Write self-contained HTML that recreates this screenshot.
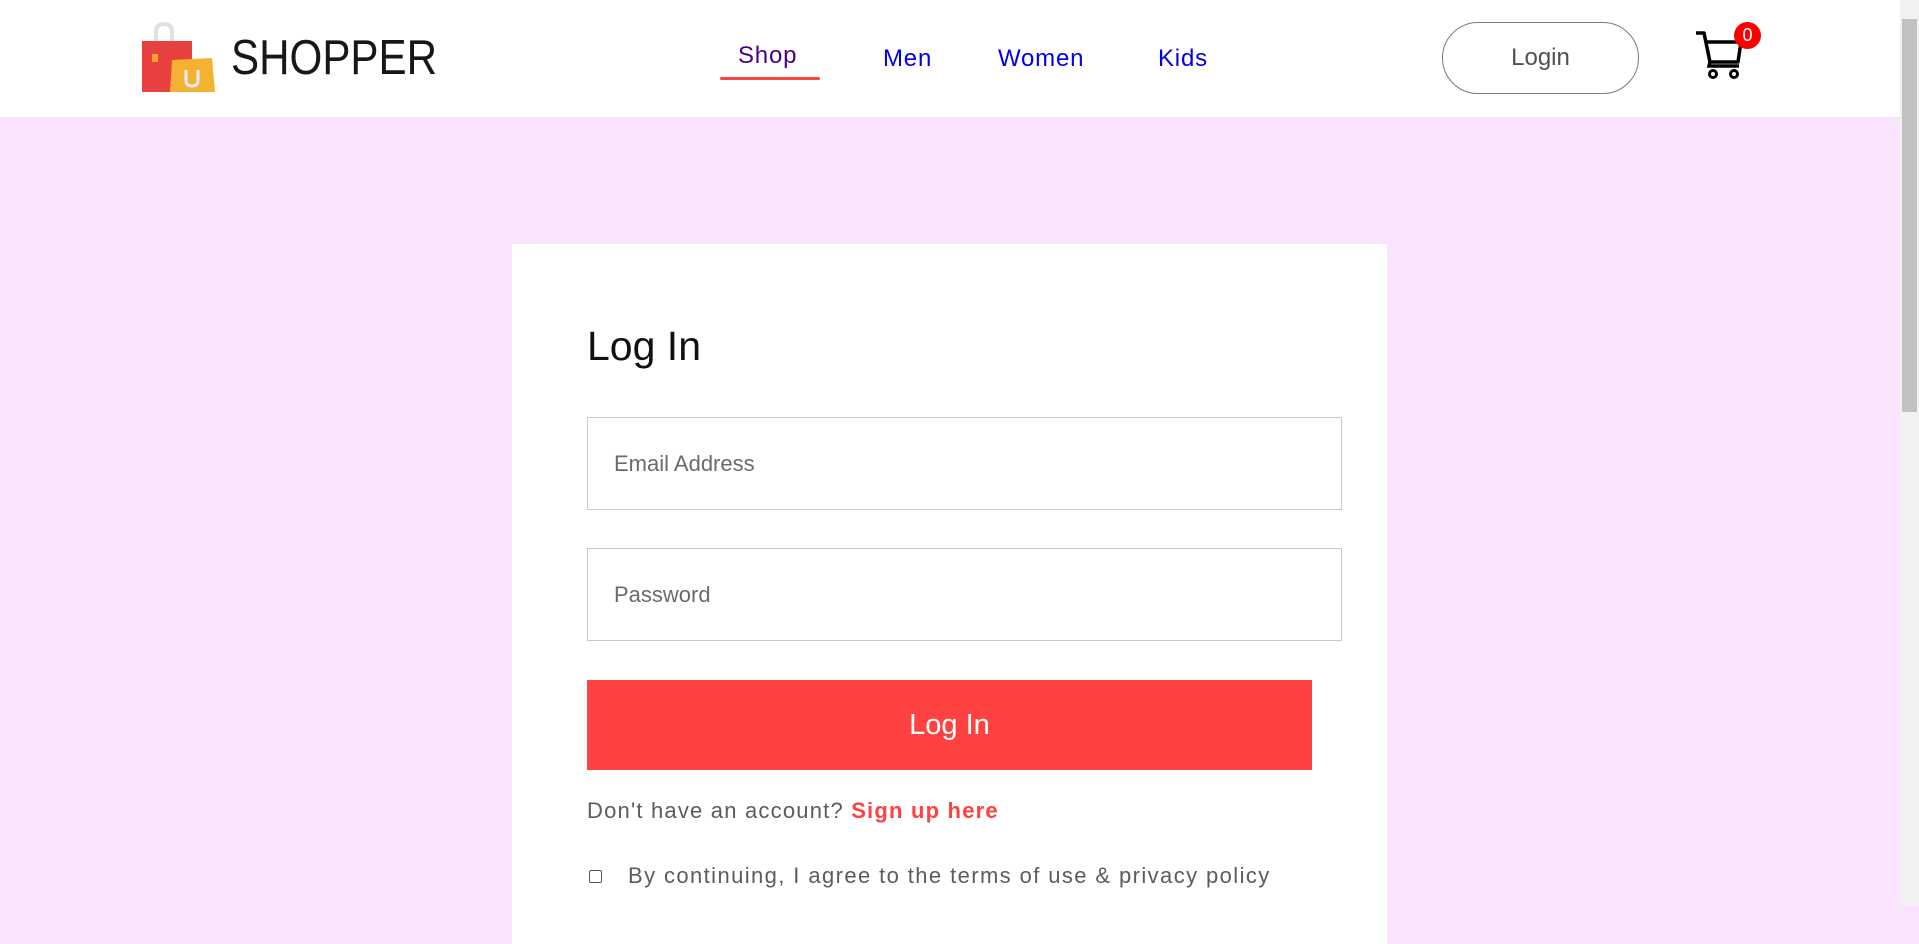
<!DOCTYPE html>
<html><head><style>
*{box-sizing:border-box;margin:0;padding:0}
body{width:1919px;height:906px;overflow:hidden;background:#fae3fc;font-family:"Liberation Sans",sans-serif;position:relative}
.hdr{position:absolute;left:0;top:0;width:1900px;height:118px;background:#fff;border-bottom:1px solid #f0e4f2}
.logo{position:absolute;left:231px;top:30px;font-size:49px;color:#171717;font-weight:500;transform:scaleX(0.86);transform-origin:left top}
.nav{position:absolute;top:42px;font-size:24px;color:#0000ee;letter-spacing:0.8px}
.shop{color:#4b0082}
.ul{position:absolute;left:720px;top:77px;width:100px;height:3px;background:#ff4141;border-radius:2px}
.lbtn{position:absolute;left:1442px;top:22px;width:197px;height:72px;border:1px solid #7a7a7a;border-radius:36px;font-size:24px;color:#515151;text-align:center;line-height:70px}
.badge{position:absolute;left:1734px;top:22px;width:27px;height:27px;border-radius:50%;background:#f00;color:#fff;font-size:18px;text-align:center;line-height:27px}
.sb{position:absolute;left:1900px;top:0;width:19px;height:906px;background:#f1f1f1}
.thumb{position:absolute;left:1902px;top:19px;width:15px;height:393px;background:#c1c1c1}
.card{position:absolute;left:512px;top:244px;width:875px;height:700px;background:#fff}
h1{position:absolute;left:587px;top:323px;font-size:41px;font-weight:500;color:#111}
.inp{position:absolute;left:587px;width:755px;height:93px;border:1px solid #c8c8c8;font-size:22px;color:#6b6b6b;padding-left:26px;line-height:91px}
.btn{position:absolute;left:587px;top:680px;width:725px;height:90px;background:#ff4141;color:#fff;font-size:29px;text-align:center;line-height:90px}
.acc{position:absolute;left:587px;top:798px;font-size:22px;color:#5c5c5c;letter-spacing:1.2px}
.acc b{color:#ff4141}
.cb{position:absolute;left:589px;top:870px;width:13px;height:13px;border:1px solid #555;border-radius:2px}
.agr{position:absolute;left:628px;top:863px;font-size:22px;color:#5c5c5c;letter-spacing:1.4px}
</style></head><body>
<div class="hdr">
<svg style="position:absolute;left:140px;top:22px" width="76" height="72" viewBox="0 0 76 72">
<path d="M16 22 V10 Q16 2 24 2 Q32 2 32 10 V22" fill="none" stroke="#e0e0e0" stroke-width="4"/>
<rect x="2" y="19" width="50" height="51" fill="#e94141"/>
<rect x="12" y="32" width="6" height="8" fill="#f5a623"/>
<path d="M32 38 L72 36 L75 70 L30 70 Z" fill="#f5b132"/>
<path d="M46 48 V58 Q46 64 52 64 Q58 64 58 58 V48" fill="none" stroke="#eee" stroke-width="3"/>
</svg>
<div class="logo">SHOPPER</div>
<div class="nav shop" style="left:738px">Shop</div>
<div class="ul"></div>
<div class="nav" style="left:883px;top:45px">Men</div>
<div class="nav" style="left:998px;top:45px">Women</div>
<div class="nav" style="left:1158px;top:45px">Kids</div>
<div class="lbtn">Login</div>
<svg style="position:absolute;left:1694px;top:30px" width="50" height="50" viewBox="0 0 50 50">
<path d="M2 3 H10 L16 32 H44 L47 12 H13" fill="none" stroke="#000" stroke-width="3.5" stroke-linejoin="round"/>
<path d="M16 32 L15 36 H45" fill="none" stroke="#000" stroke-width="3.5"/>
<circle cx="19" cy="44" r="3.5" fill="none" stroke="#000" stroke-width="3"/>
<circle cx="40" cy="44" r="3.5" fill="none" stroke="#000" stroke-width="3"/>
</svg>
<div class="badge">0</div>
</div>
<div class="sb"></div><div class="thumb"></div>
<div class="card"></div>
<h1>Log In</h1>
<div class="inp" style="top:417px">Email Address</div>
<div class="inp" style="top:548px">Password</div>
<div class="btn">Log In</div>
<div class="acc">Don't have an account? <b>Sign up here</b></div>
<div class="cb"></div>
<div class="agr">By continuing, I agree to the terms of use &amp; privacy policy</div>
</body></html>
